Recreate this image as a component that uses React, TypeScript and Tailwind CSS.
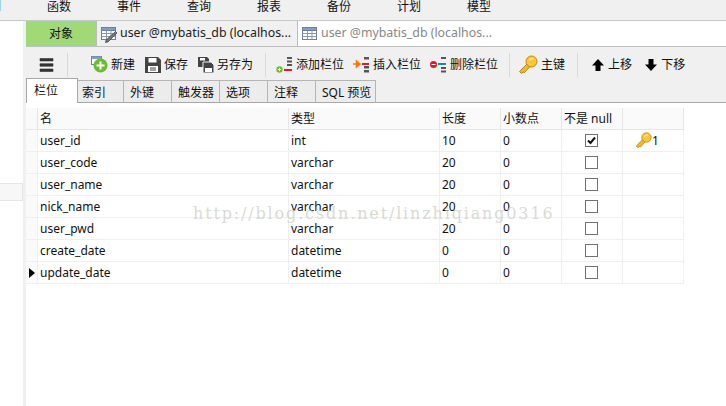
const menus = ['函数', '事件', '查询', '报表', '备份', '计划', '模型'];
const tabs = ['索引', '外键', '触发器', '选项', '注释', 'SQL 预览'];
const rows = [
  { name: 'user_id', type: 'int', len: '10', checked: true, key: true },
  { name: 'user_code', type: 'varchar', len: '20' },
  { name: 'user_name', type: 'varchar', len: '20' },
  { name: 'nick_name', type: 'varchar', len: '20' },
  { name: 'user_pwd', type: 'varchar', len: '20' },
  { name: 'create_date', type: 'datetime', len: '0' },
  { name: 'update_date', type: 'datetime', len: '0', current: true },
];

function KeyIcon({ size = 20 }: { size?: number }) {
  return (
    <svg width={size} height={size} viewBox="0 0 20 20">
      <path d="M10 8 L1.500 16.500 L3.500 18.500 L5 17 L6.500 17.500 L12.500 11" fill="#f2b92c" stroke="#bd8410" />
      <circle cx="13.500" cy="6.500" r="5.500" fill="#f7c93a" stroke="#bd8410" />
      <path d="M11 5.500 Q13 3 15.500 3.500" fill="none" stroke="#fde68a" strokeWidth="1.500" />
    </svg>
  );
}

function TableIcon({ pen }: { pen?: boolean }) {
  return (
    <svg width="18" height="18" viewBox="0 0 18 18">
      <rect x="1.500" y="2.500" width="14" height="12" fill="#fff" stroke="#6d7f99" />
      <rect x="1.500" y="2.500" width="14" height="3" fill="#7f9fc8" stroke="#6d7f99" />
      <path d="M1.500 8.500H15.500M1.500 11.500H15.500M6.500 5.500V14.500M11 5.500V14.500" stroke="#8b98aa" />
      {pen && <path d="M15.500 6.500 L17 8 L8 17 L5.500 17.500 L6 15 Z" fill="#777" stroke="#444" strokeWidth="0.700" />}
    </svg>
  );
}

function ColumnIcon({ mode }: { mode: 'add' | 'insert' | 'remove' }) {
  return (
    <svg width="18" height="18" viewBox="0 0 18 18">
      {mode === 'add' && (
        <>
          <path d="M12 1h5v2h-5zM12 4.500h5v2h-5zM12 8h5v2h-5z" fill="#555" />
          <rect x="9" y="13" width="8" height="2" fill="#e2182c" />
          <circle cx="4.500" cy="13.500" r="3.200" fill="#6dbb2e" />
          <path d="M2.800 13.500h3.400M4.500 11.800v3.400" stroke="#fff" />
        </>
      )}
      {mode === 'insert' && (
        <>
          <path d="M12 1h5v2.500h-5zM12 10h5v2.500h-5zM12 14h5v2.500h-5z" fill="#555" />
          <rect x="10" y="7" width="7" height="2" fill="#e2182c" />
          <path d="M1 8h4M4.500 5l3.500 3-3.500 3z" stroke="#f07a10" strokeWidth="1.500" fill="#f07a10" />
        </>
      )}
      {mode === 'remove' && (
        <>
          <path d="M12 1h5v2h-5zM12 11h5v2h-5zM12 14.500h5v2h-5z" fill="#555" />
          <rect x="9" y="7" width="8" height="2" fill="#1f86a8" />
          <circle cx="4.500" cy="8.500" r="3.500" fill="#e2182c" />
          <path d="M2.500 8.500h4" stroke="#fff" />
        </>
      )}
    </svg>
  );
}

function Divider() {
  return <div className="h-[24px] w-px bg-[#d9d9d9]" />;
}

function ToolButton({ icon, label, className }: { icon: React.ReactNode; label: string; className: string }) {
  return (
    <div className={`flex items-center gap-[3px] ${className}`}>
      {icon}
      <span>{label}</span>
    </div>
  );
}

export default function App() {
  return (
    <div className="relative flex h-[406px] w-[726px] flex-col overflow-hidden bg-white text-[12px] text-[#111] [font-family:'Noto_Sans','Noto_Sans_CJK_SC',sans-serif]">
      <div className="flex h-[21px] shrink-0 border-b border-[#c8c8c8] bg-[#f0f0f0] pl-[47px]">
        {menus.map((m) => (
          <div key={m} className="w-[70px] text-[12px] leading-[14px]">{m}</div>
        ))}
      </div>
      <div className="absolute left-0 top-0 h-[11px] w-px bg-[#9fd3f5]" />
      <div className="flex min-h-0 flex-1">
        <div className="w-[23px] shrink-0 pt-[162px]">
          <div className="h-[18px] border-y border-r border-[#e5e5e5] bg-[#f7f7f7]" />
        </div>
        <div className="w-[3px] shrink-0 bg-[#f0f0f0]" />
        <div className="flex min-w-0 flex-1 flex-col">
          <div className="flex h-[26px] shrink-0 border-b border-[#bdbdbd] bg-white">
            <div className="flex w-[71px] items-center justify-center border-r border-[#bdbdbd] bg-[#a2d977]">对象</div>
            <div className="flex w-[200px] items-center gap-[2px] bg-[#f0f0f0] pl-[3px] text-[12.35px] text-[#222]">
              <TableIcon pen />
              <span className="whitespace-nowrap">user @mybatis_db (localhos...</span>
            </div>
            <div className="flex w-[200px] items-center gap-[2px] border-l border-[#bdbdbd] pl-[3px] text-[12.35px] text-[#888]">
              <TableIcon />
              <span className="whitespace-nowrap">user @mybatis_db (localhos...</span>
            </div>
          </div>
          <div className="flex h-[33px] shrink-0 items-center bg-[#f0f0f0] pt-[2px]">
            <div className="flex w-[41px] justify-center">
              <svg width="15" height="14" viewBox="0 0 15 14">
                <path d="M1 0.500H14V3H1ZM1 5.700H14V8.200H1ZM1 11H14V13.500H1Z" fill="#333" stroke="#333" strokeWidth="0.600" />
              </svg>
            </div>
            <Divider />
            <ToolButton className="ml-[23px]" label="新建" icon={
              <svg width="17" height="17" viewBox="0 0 17 17">
                <rect x="0.500" y="0.500" width="10" height="8" fill="#fff" stroke="#6d7f99" />
                <rect x="0.500" y="0.500" width="10" height="2.500" fill="#7f9fc8" />
                <circle cx="9.500" cy="9.500" r="7" fill="#6dbb2e" />
                <path d="M5.500 9.500h8M9.500 5.500v8" stroke="#fff" strokeWidth="2" />
              </svg>
            } />
            <ToolButton className="ml-[10px]" label="保存" icon={
              <svg width="16" height="16" viewBox="0 0 16 16">
                <path d="M0 0H13L16 3V16H0Z" fill="#444" />
                <rect x="3.500" y="1" width="8" height="4.500" fill="#fff" />
                <rect x="3" y="9" width="10" height="6" fill="#fff" />
                <path d="M5 11h6M5 13h6" stroke="#444" />
              </svg>
            } />
            <ToolButton className="ml-[10px]" label="另存为" icon={
              <svg width="16" height="16" viewBox="0 0 16 16">
                <path d="M0 0H9L11 2V10H0Z" fill="#444" />
                <rect x="2" y="1" width="5" height="2.500" fill="#fff" />
                <path d="M5 5H13L16 8V16H5Z" fill="#444" stroke="#f0f0f0" />
                <rect x="7" y="11" width="7" height="4" fill="#fff" />
              </svg>
            } />
            <div className="ml-[12px]"><Divider /></div>
            <ToolButton className="ml-[9px]" label="添加栏位" icon={<ColumnIcon mode="add" />} />
            <ToolButton className="ml-[8px]" label="插入栏位" icon={<ColumnIcon mode="insert" />} />
            <ToolButton className="ml-[8px]" label="删除栏位" icon={<ColumnIcon mode="remove" />} />
            <div className="ml-[11px]"><Divider /></div>
            <ToolButton className="ml-[8px]" label="主键" icon={<KeyIcon />} />
            <div className="ml-[12px]"><Divider /></div>
            <ToolButton className="ml-[13px]" label="上移" icon={
              <svg width="14" height="14" viewBox="0 0 14 14">
                <path d="M7 1 13 7.500H9.500V13H4.500V7.500H1Z" fill="#000" />
              </svg>
            } />
            <ToolButton className="ml-[12px]" label="下移" icon={
              <svg width="14" height="14" viewBox="0 0 14 14">
                <path d="M7 13 13 6.500H9.500V1H4.500V6.500H1Z" fill="#000" />
              </svg>
            } />
          </div>
          <div className="flex h-[23px] shrink-0 items-end border-b border-[#a8a8a8] bg-[#f0f0f0]">
            <div className="z-10 -mb-px flex h-[25px] w-[52px] items-start border-x border-t border-[#a8a8a8] bg-white pl-[7px] pt-[3px]">栏位</div>
            {tabs.map((t, i) => (
              <div key={t} className={`flex h-[22px] items-center border-t border-r border-[#b5b5b5] bg-[#ececec] pt-[2px] ${i === 0 ? 'w-[46px] pl-[4px]' : 'w-[48px] pl-[6px]'} ${i === 5 ? 'w-[60px]' : ''}`}>{t}</div>
            ))}
          </div>
          <div className="min-h-0 flex-1 pt-[5px]">
            <div className="grid w-[658px] grid-cols-[12px_251px_151px_61px_61px_61px_61px] border-r border-[#efefef]">
              <div className="h-[22px] border-r border-b border-[#e6e6e6] bg-[#fafafa]" />
              {['名', '类型', '长度', '小数点', '不是 null', ''].map((h, i) => (
                <div key={i} className="flex h-[22px] items-center border-r border-b border-[#e6e6e6] bg-[#fafafa] pl-[2px]">{h}</div>
              ))}
              {rows.map((r) => (
                <div key={r.name} className="contents">
                  <div className="flex h-[22px] items-center border-r border-b border-[#efefef] bg-[#fafafa] pl-[3px]">
                    {r.current && <div className="h-0 w-0 border-y-[5px] border-l-[6px] border-y-transparent border-l-black" />}
                  </div>
                  <div className="flex items-center border-r border-b border-[#efefef] pl-[2px]">{r.name}</div>
                  <div className="flex items-center border-r border-b border-[#efefef] pl-[2px]">{r.type}</div>
                  <div className="flex items-center border-r border-b border-[#efefef] pl-[2px]">{r.len}</div>
                  <div className="flex items-center border-r border-b border-[#efefef] pl-[2px]">0</div>
                  <div className="flex items-center justify-center border-r border-b border-[#efefef] pr-[2px]">
                    <div className="flex h-[13px] w-[13px] items-center justify-center border border-[#707070] bg-white">
                      {r.checked && (
                        <svg width="9" height="9" viewBox="0 0 9 9">
                          <path d="M1 4.500 3.500 7 8 1.500" fill="none" stroke="#111" strokeWidth="2" />
                        </svg>
                      )}
                    </div>
                  </div>
                  <div className="flex items-center border-b border-[#efefef] pl-[12px]">
                    {r.key && (
                      <>
                        <KeyIcon size={17} />
                        <span>1</span>
                      </>
                    )}
                  </div>
                </div>
              ))}
            </div>
          </div>
        </div>
      </div>
      <div className="pointer-events-none absolute left-[193px] top-[204px] whitespace-nowrap text-[16px] leading-[20px] tracking-[1.85px] text-[#c9c9c0]/70 [font-family:'DejaVu_Serif',serif]">
        http://blog.csdn.net/linzhiqiang0316
      </div>
    </div>
  );
}
